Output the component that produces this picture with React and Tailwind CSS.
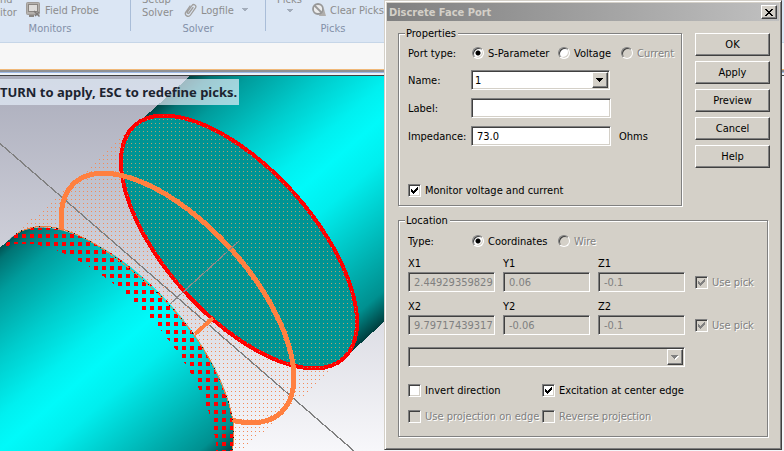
import React from "react";

const SUNKEN =
  "border border-t-[#808080] border-l-[#808080] border-r-white border-b-white shadow-[inset_1px_1px_0_#404040,inset_-1px_-1px_0_#d4d0c8]";
const RAISED =
  "border border-t-white border-l-white border-r-[#404040] border-b-[#404040] shadow-[inset_-1px_-1px_0_#808080] bg-[#d4d0c8]";
const EMBOSSED = "text-[#808080] [text-shadow:1px_1px_0_#fff]";

function Check({ label, disabled, checked }) {
  return (
    <label className={`flex items-center gap-1 whitespace-nowrap ${disabled ? EMBOSSED : ""}`}>
      <span className="relative block size-[13px] shrink-0">
        <input
          type="checkbox"
          defaultChecked={checked}
          disabled={disabled}
          className={`peer block size-[13px] appearance-none ${SUNKEN} ${disabled ? "bg-[#d4d0c8]" : "bg-white"}`}
        />
        <svg
          viewBox="0 0 13 13"
          className="pointer-events-none absolute inset-0 hidden peer-checked:block"
          shapeRendering="crispEdges"
          aria-hidden="true"
        >
          <path
            d="M3 5h1v1h1v1h1v-1h1v-1h1v-1h1v-1h1v3h-1v1h-1v1h-1v1h-1v1h-1v-1h-1v-1h-1z"
            fill={disabled ? "#808080" : "#000"}
          />
        </svg>
      </span>
      <span>{label}</span>
    </label>
  );
}

function Radio({ name, label, disabled, checked }) {
  return (
    <label className={`flex items-center gap-1 pl-px whitespace-nowrap ${disabled ? EMBOSSED : ""}`}>
      <input
        type="radio"
        name={name}
        defaultChecked={checked}
        disabled={disabled}
        className={`block size-3 shrink-0 appearance-none rounded-full ${SUNKEN} checked:bg-[radial-gradient(circle,#000_2px,transparent_3px)] ${disabled ? "bg-[#d4d0c8]" : "bg-white"}`}
      />
      <span>{label}</span>
    </label>
  );
}

function Combo({ id, label, value, disabled, className }) {
  return (
    <div className={`relative ${className}`}>
      <select
        id={id}
        aria-label={label}
        disabled={disabled}
        defaultValue={value}
        className={`block h-5 w-full appearance-none px-[3px] opacity-100 ${SUNKEN} ${disabled ? "bg-[#d4d0c8]" : "bg-white"}`}
      >
        <option value={value}>{value}</option>
      </select>
      <span className={`pointer-events-none absolute top-[2px] right-[2px] flex size-4 items-center justify-center ${RAISED}`}>
        <svg width="8" height="5" viewBox="0 0 8 5" shapeRendering="crispEdges" aria-hidden="true">
          {disabled && <path d="M1 1h7v1h-1v1h-1v1h-1v1h-1v-1h-1v-1h-1v-1h-1z" fill="#fff" />}
          <path d="M0 0h7v1h-1v1h-1v1h-1v1h-1v-1h-1v-1h-1v-1h-1z" fill={disabled ? "#808080" : "#000"} />
        </svg>
      </span>
    </div>
  );
}

function Group({ title, className, children }) {
  return (
    <fieldset
      className={`border border-[#808080] px-[9px] shadow-[1px_1px_0_#fff,inset_1px_1px_0_#fff] ${className}`}
    >
      <legend className="-ml-[3px] bg-[#d4d0c8] pr-[2px] pl-px leading-[13px]">{title}</legend>
      {children}
    </fieldset>
  );
}

function Field({ id, label, value }) {
  return (
    <div className="flex flex-col gap-[2px]">
      <label htmlFor={id} className="leading-[13px]">
        {label}
      </label>
      <input
        id={id}
        disabled
        defaultValue={value}
        className={`h-5 w-full bg-[#d4d0c8] pr-px pl-[5px] text-[#808080] ${SUNKEN}`}
      />
    </div>
  );
}

function PointRow({ n, values }) {
  return (
    <div className="flex items-end gap-[10px]">
      <div className="grid w-[277px] grid-cols-3 gap-2">
        {["X", "Y", "Z"].map((axis, i) => (
          <Field key={axis} id={`${axis}${n}`} label={`${axis}${n}`} value={values[i]} />
        ))}
      </div>
      <div className="flex h-5 items-center">
        <Check label="Use pick" checked disabled />
      </div>
    </div>
  );
}

function Dialog() {
  return (
    <section
      role="dialog"
      aria-label="Discrete Face Port"
      className="absolute top-0 left-[384px] w-[398px] border border-t-[#d4d0c8] border-r-[#404040] border-b-[#404040] border-l-[#d4d0c8] bg-[#d4d0c8] p-[2px] text-black shadow-[inset_1px_1px_0_#fff,inset_-1px_-1px_0_#808080]"
    >
      <header className="flex h-[18px] items-center justify-between bg-linear-to-r from-[#808080] to-[#c0c0c0] pr-[2px] pl-[2px]">
        <h1 className="font-bold text-[#d4d0c8]">Discrete Face Port</h1>
        <button aria-label="Close" className={`flex h-[14px] w-4 items-center justify-center ${RAISED}`}>
          <svg width="8" height="7" viewBox="0 0 8 7" shapeRendering="crispEdges" aria-hidden="true">
            <path
              d="M0 0h2v1h1v1h2v-1h1v-1h2v1h-1v1h-1v1h-1v1h1v1h1v1h1v1h-2v-1h-1v-1h-2v1h-1v1h-2v-1h1v-1h1v-1h1v-1h-1v-1h-1v-1h-1z"
              fill="#000"
            />
          </svg>
        </button>
      </header>
      <div className="pt-[6px] pr-[9px] pb-[10px] pl-[11px]">
        <div className="flex gap-[13px]">
          <Group title="Properties" className="min-w-0 flex-1 pb-2">
            <div className="grid h-[23px] grid-cols-[63px_86px_63px_auto] items-center pt-[3px]">
              <span>Port type:</span>
              <Radio name="port" label="S-Parameter" checked />
              <Radio name="port" label="Voltage" />
              <Radio name="port" label="Current" disabled />
            </div>
            <div className="mt-[7px] grid grid-cols-[63px_140px_auto] items-center gap-y-2">
              <label htmlFor="name">Name:</label>
              <Combo id="name" value="1" className="w-[139px]" />
              <span />
              <label htmlFor="label">Label:</label>
              <input id="label" className={`h-5 bg-white px-[5px] ${SUNKEN}`} />
              <span />
              <label htmlFor="impedance">Impedance:</label>
              <input id="impedance" defaultValue="73.0" className={`h-5 bg-white px-[5px] ${SUNKEN}`} />
              <span className="pl-2">Ohms</span>
            </div>
            <div className="mt-[38px] h-[13px]">
              <Check label="Monitor voltage and current" checked />
            </div>
          </Group>
          <div className="flex w-[75px] flex-col gap-[5px] pt-[6px]">
            {["OK", "Apply", "Preview", "Cancel", "Help"].map((t) => (
              <button key={t} className={`h-[23px] w-full ${RAISED}`}>
                {t}
              </button>
            ))}
          </div>
        </div>
        <Group title="Location" className="mt-2 mr-[2px] pb-[13px]">
          <div className="grid h-6 grid-cols-[63px_86px_auto] items-center pt-1">
            <span>Type:</span>
            <Radio name="type" label="Coordinates" checked />
            <Radio name="type" label="Wire" disabled />
          </div>
          <div className="mt-[6px] flex flex-col gap-2">
            <PointRow n={1} values={["2.449293598294", "0.06", "-0.1"]} />
            <PointRow n={2} values={["9.797174393178", "-0.06", "-0.1"]} />
          </div>
          <Combo id="edge" label="Projection edge" value="" disabled className="mt-3 w-[277px]" />
          <div className="mt-[17px] grid grid-cols-[134px_auto] gap-y-[13px] leading-[13px]">
            <Check label="Invert direction" />
            <Check label="Excitation at center edge" checked />
            <Check label="Use projection on edge" disabled />
            <Check label="Reverse projection" disabled />
          </div>
        </Group>
      </div>
    </section>
  );
}

function DropArrow() {
  return (
    <svg width="6" height="4" viewBox="0 0 6 4" shapeRendering="crispEdges" aria-hidden="true">
      <path d="M0 0h6v1h-1v1h-1v1h-2v-1h-1v-1h-1z" fill="#a3adbb" />
    </svg>
  );
}

function Ribbon() {
  const item = "flex h-5 items-center gap-1 whitespace-nowrap";
  return (
    <nav className="flex h-[43px] shrink-0 overflow-hidden border-b border-[#c6d6e8] bg-[#dbe6f4] text-[#8d8d8d]">
      <div className="flex w-[130px] shrink-0 flex-col">
        <div className="flex h-[22px]">
          <div className="-mt-[7px] w-[26px] leading-[13px]">
            <div>nd</div>
            <div>itor</div>
          </div>
          <button className={item}>
            <svg width="15" height="16" viewBox="0 0 15 16" aria-hidden="true">
              <rect x="0.5" y="0.5" width="13" height="12" rx="1" fill="#b4b0ac" stroke="#a09c98" />
              <rect x="2.5" y="2.5" width="9" height="7" fill="#dedcda" stroke="#8a8682" />
              <path d="M3 14h5" stroke="#8a8682" strokeWidth="2" />
              <path d="M8 9l5.500 5.500M9 14l4-4" stroke="#7e7a78" strokeWidth="1.500" />
            </svg>
            Field Probe
          </button>
        </div>
        <div className="pr-[30px] text-center leading-[14px] text-[#8390a8]">Monitors</div>
      </div>
      <div className="h-[31px] w-px bg-[#a9bdd8]" />
      <div className="flex w-[134px] shrink-0 flex-col">
        <div className="flex h-[22px] pl-[11px]">
          <button className="-mt-[7px] h-[26px] w-[42px] text-left leading-[13px]">
            Setup
            <br />
            Solver
          </button>
          <button className={item}>
            <svg
              width="13"
              height="15"
              viewBox="0 0 13 15"
              fill="none"
              stroke="#a09e9c"
              strokeWidth="1.300"
              strokeLinecap="round"
              aria-hidden="true"
            >
              <path d="M9 4.500L5 10c-.8 1.100-2.300.1-1.500-1.100L8 2.500c1.600-2.200 5-.1 3.500 2.300L6.500 12c-2 2.900-6.600.4-4.700-2.900L6 3" />
            </svg>
            Logfile
            <span className="pl-1">
              <DropArrow />
            </span>
          </button>
        </div>
        <div className="text-center leading-[14px] text-[#8390a8]">Solver</div>
      </div>
      <div className="h-[31px] w-px bg-[#a9bdd8]" />
      <div className="flex w-[134px] shrink-0 flex-col">
        <div className="flex h-[22px] pl-[11px]">
          <button className="-mt-[7px] flex h-[26px] w-[35px] flex-col items-start leading-[13px]">
            Picks
            <span className="pt-[3px] pl-[10px]">
              <DropArrow />
            </span>
          </button>
          <button className={item}>
            <svg width="14" height="14" viewBox="0 0 14 14" fill="none" aria-hidden="true">
              <path d="M8 9l4-3 2 7H7z" fill="#b0aeac" />
              <circle cx="6" cy="6" r="5" fill="#ececec" stroke="#989898" strokeWidth="1.800" />
              <path d="M2.500 2.500l7 7" stroke="#989898" strokeWidth="1.800" />
            </svg>
            Clear Picks
          </button>
        </div>
        <div className="text-center leading-[14px] text-[#8390a8]">Picks</div>
      </div>
    </nav>
  );
}

function Scene() {
  const rim = { rx: 156.5, ry: 73.6 };
  return (
    <svg
      className="block h-full w-full"
      viewBox="0 76 784 375"
      preserveAspectRatio="xMinYMin slice"
      shapeRendering="crispEdges"
      role="img"
      aria-label="Two cylinders joined by a discrete face port"
    >
      <defs>
        <linearGradient id="sky" x1="0" y1="0" x2="0" y2="1">
          <stop offset="0" stopColor="#abadbc" />
          <stop offset="1" stopColor="#f7f7fa" />
        </linearGradient>
        <linearGradient id="metal" gradientUnits="userSpaceOnUse" x1="122" y1="137" x2="327" y2="373">
          <stop offset="0" stopColor="#004848" />
          <stop offset="0.04" stopColor="#007474" />
          <stop offset="0.12" stopColor="#009c9c" />
          <stop offset="0.28" stopColor="#00cccc" />
          <stop offset="0.42" stopColor="#00f0f0" />
          <stop offset="0.5" stopColor="#00fafa" />
          <stop offset="0.6" stopColor="#00eeee" />
          <stop offset="0.76" stopColor="#00c0c0" />
          <stop offset="0.92" stopColor="#009090" />
          <stop offset="1" stopColor="#003c3c" />
        </linearGradient>
        <pattern id="fine" width="4" height="4" patternUnits="userSpaceOnUse">
          <rect x="3" y="3" width="1" height="1" fill="#f58a58" />
        </pattern>
        <pattern id="faceDots" width="4" height="4" patternUnits="userSpaceOnUse">
          <rect x="3" y="3" width="1" height="1" fill="#b4a070" />
        </pattern>
        <pattern id="coarse" width="8" height="8" patternUnits="userSpaceOnUse">
          <rect x="6" y="2" width="2" height="4" fill="#f00" />
          <rect x="0" y="2" width="2" height="4" fill="#f00" />
        </pattern>
        <mask id="crescent" maskUnits="userSpaceOnUse" x="0" y="76" width="400" height="400">
          <ellipse {...rim} transform="translate(116 354) rotate(48.1)" fill="#fff" />
          <ellipse {...rim} transform="translate(98 370) rotate(48.1)" fill="#000" />
        </mask>
        <clipPath id="faceClip">
          <ellipse {...rim} transform="translate(239 242) rotate(48.1)" />
        </clipPath>
        <clipPath id="frontClip">
          <ellipse {...rim} transform="translate(116 354) rotate(48.1)" />
        </clipPath>
      </defs>
      <rect y="76" width="784" height="375" fill="url(#sky)" />
      <rect x="384" y="76" width="400" height="375" fill="#f4f5f9" />
      <path d="M135 125.500L190 76H384V322L344 358.500z" fill="url(#metal)" />
      <path d="M11 238L135 125L344 359L220 471z" fill="url(#fine)" />
      <ellipse {...rim} transform="translate(239 242) rotate(48.1)" fill="#009494" stroke="#f00" strokeWidth="4" />
      <rect x="110" y="100" width="260" height="280" fill="url(#faceDots)" clipPath="url(#faceClip)" />
      <path d="M0 143.500L354 451" stroke="#808080" strokeWidth="1.300" />
      <ellipse
        rx="154.500"
        ry="72.500"
        transform="translate(177.500 298) rotate(48.1)"
        fill="none"
        stroke="#ff8040"
        strokeWidth="5"
      />
      <path d="M170 304L239 241" stroke="#8c8888" strokeWidth="1.200" />
      <path d="M12 237.500L0 247.500V451H220z" fill="url(#metal)" />
      <rect y="200" width="260" height="260" fill="url(#metal)" clipPath="url(#frontClip)" />
      <rect y="200" width="260" height="260" fill="url(#coarse)" mask="url(#crescent)" />
      <g fill="none" strokeWidth="1">
        <path d="M16 234C40 219 72 228 106 251C155 285 196 328 217 374C232 405 237 432 232 451" stroke="#f08040" />
        <path
          d="M16 234C40 219 72 228 106 251C155 285 196 328 217 374C232 405 237 432 232 451"
          stroke="#102020"
          strokeDasharray="1 5 1 11"
        />
      </g>
      <path d="M195 334L213 318" stroke="#ff8040" strokeWidth="4" />
    </svg>
  );
}

export default function App() {
  return (
    <main className="relative flex min-h-screen flex-col overflow-hidden bg-[#f7f7f7] font-['DejaVu_Sans_Condensed','DejaVu_Sans',sans-serif] text-[11px] leading-[13px]">
      <Ribbon />
      <div className="h-[26px] shrink-0 bg-[#f7f7f7]" />
      <div className="shrink-0">
        <div className="h-px bg-[#f0b878]" />
        <div className="h-[2px] bg-[#8f9094]" />
        <div className="h-px bg-[#9db8e4]" />
        <div className="h-[2px] bg-[#eef2f8]" />
        <div className="h-px bg-[#404040]" />
      </div>
      <div className="relative grid flex-1">
        <Scene />
        <p className="absolute top-[3px] left-0 w-[239px] bg-[#e4eefa]/70 py-[5px] font-['Noto_Sans','Open_Sans',sans-serif] text-[13px] leading-4 font-bold whitespace-nowrap text-[#1c2430]">
          TURN to apply, ESC to redefine picks.
        </p>
      </div>
      <Dialog />
    </main>
  );
}
